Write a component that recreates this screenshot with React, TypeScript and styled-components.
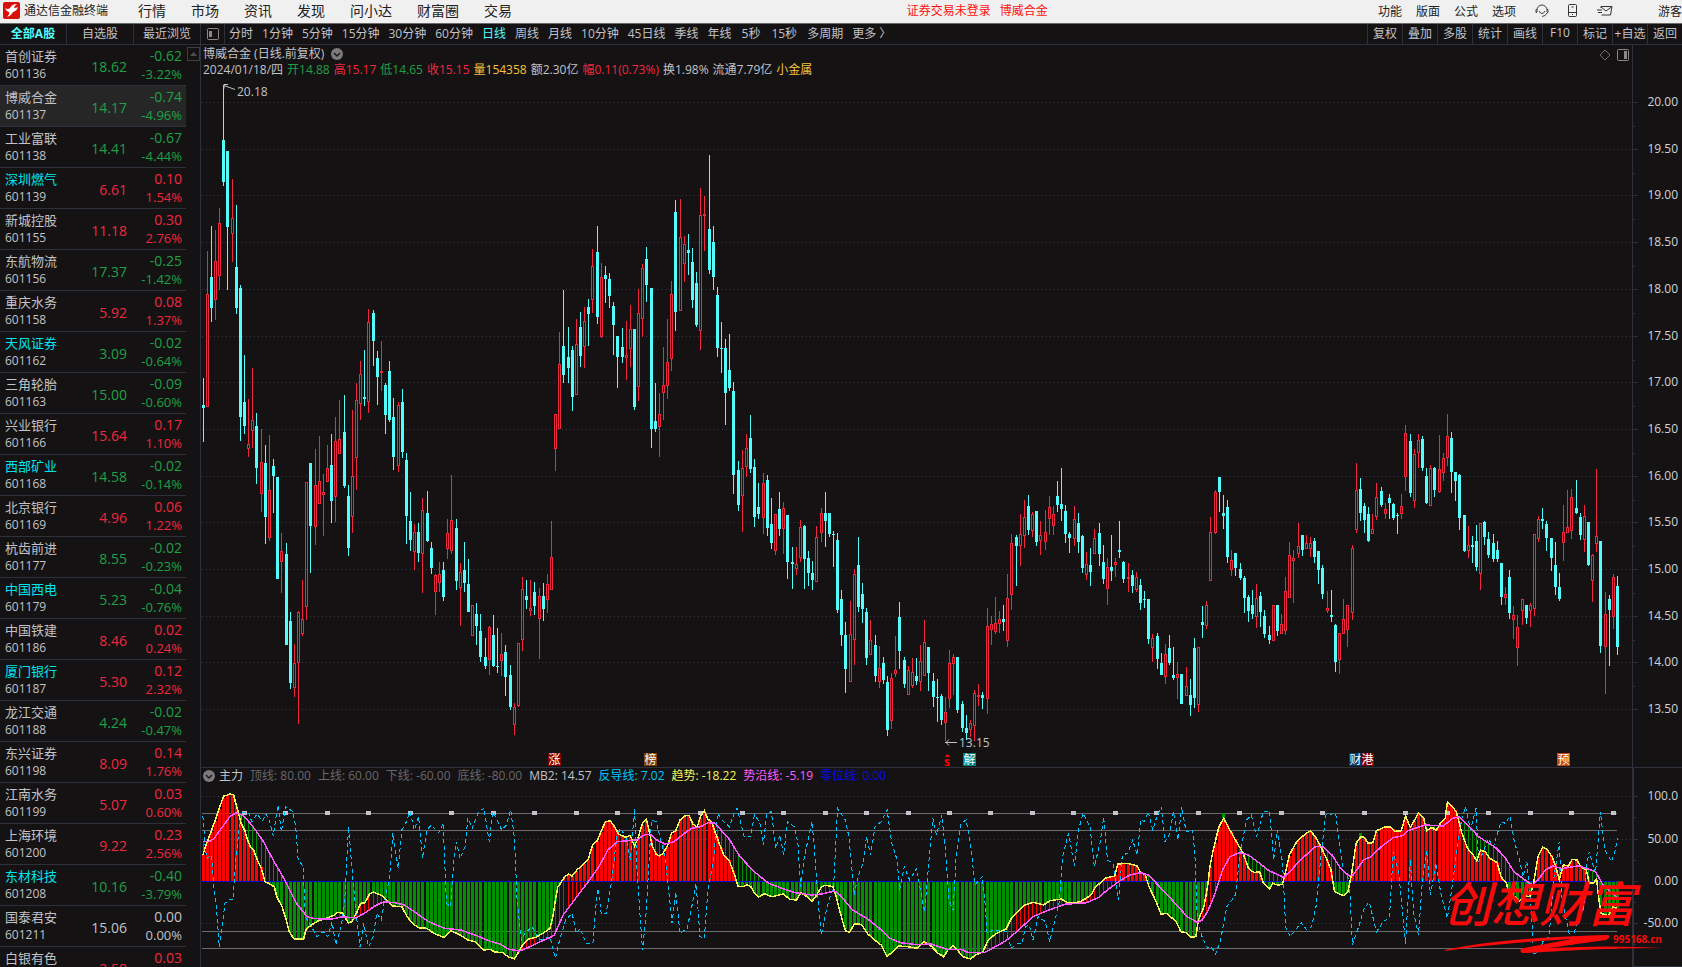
import React from 'react';
import styled, { createGlobalStyle } from 'styled-components';

const c = {
  bg: '#141213',
  line: '#2e303c',
  text: '#c2c2c8',
  dim: '#69676b',
  up: '#f0283f',
  down: '#1fa046',
  cyan: '#54fcfc',
  gold: '#f5c242',
};

const Global = createGlobalStyle`
  * { box-sizing: border-box; }
  html, body { margin: 0; background: ${c.bg}; }
  body, button { font-family: "Open Sans", "Noto Sans CJK SC", sans-serif; font-size: 12px; }
  button { border: 0; padding: 0; margin: 0; background: none; color: inherit; white-space: nowrap; cursor: pointer; }
`;

const Page = styled.div`
  display: flex;
  flex-direction: column;
  height: 100vh;
  overflow: hidden;
  color: ${c.text};
  line-height: 16px;
`;

const TopBar = styled.header`
  display: flex;
  align-items: center;
  height: 24px;
  flex: none;
  padding: 0 0 2px 3px;
  background: #f0f0f0;
  border-bottom: 1px solid #6a6a6a;
  color: #222;
  overflow: hidden;
`;
const Brand = styled.div`
  display: flex;
  align-items: center;
  gap: 4px;
  width: 135px;
  flex: none;
`;
const Menu = styled.nav`
  display: flex;
  gap: 25px;
  flex: 62 1 0;
  button { font-size: 14px; line-height: 20px; }
`;
const Notice = styled.div`
  display: flex;
  flex: 38 1 0;
  gap: 9px;
  color: #ff1010;
`;
const Tools = styled.div`
  display: flex;
  align-items: center;
  gap: 14px;
  flex: none;
`;
const ToolIcons = styled.div`
  display: flex;
  align-items: center;
  gap: 19px;
  width: 114px;
  padding-left: 5px;
`;
const Guest = styled.button`
  width: 24px;
`;

const ToolBar = styled.div`
  display: flex;
  height: 21px;
  flex: none;
  border-bottom: 1px solid ${c.line};
`;
const ListTabs = styled.div`
  display: flex;
  width: 201px;
  flex: none;
  border-right: 1px solid ${c.line};
`;
const ListTab = styled.button<{ $on?: boolean }>`
  flex: 1;
  padding-bottom: 3px;
  border-right: 1px solid ${c.line};
  color: ${(p) => (p.$on ? c.cyan : c.text)};
  font-weight: ${(p) => (p.$on ? 700 : 400)};
  &:last-child { border-right: 0; }
`;
const PanelToggle = styled.button`
  width: 24px;
  height: 20px;
  padding-top: 3px;
  border-right: 1px solid ${c.line};
`;
const Periods = styled.nav`
  display: flex;
  flex: 1;
  gap: 9px;
  padding: 0 0 3px 4px;
`;
const Period = styled.button<{ $on?: boolean; $wide?: boolean }>`
  color: ${(p) => (p.$on ? c.cyan : c.text)};
  padding: 0 ${(p) => (p.$wide ? 1 : 0)}px;
`;
const Actions = styled.div`
  display: flex;
`;
const Action = styled.button`
  width: 35px;
  padding-bottom: 3px;
  border-left: 1px solid ${c.line};
  overflow: hidden;
`;

const Main = styled.main`
  display: flex;
  flex: 1;
  min-height: 0;
`;
const Side = styled.aside`
  display: flex;
  width: 201px;
  flex: none;
  overflow: hidden;
  border-right: 1px solid ${c.line};
`;
const Scroll = styled.div`
  width: 14px;
  padding: 2px 0 0 1px;
`;
const ScrollUp = styled.button`
  display: flex;
  align-items: center;
  justify-content: center;
  width: 13px;
  height: 14px;
  border: 1px solid #3e3e42;
`;
const Stocks = styled.table`
  width: 186px;
  height: max-content;
  border-spacing: 0;
  table-layout: fixed;
`;
const StockRow = styled.tr<{ $on?: boolean }>`
  background: ${(p) => (p.$on ? '#262626' : 'transparent')};
`;
const Cell = styled.td<{ $tone?: string; $right?: boolean }>`
  height: 41px;
  padding: 2px 4px 0 5px;
  border-bottom: 1px solid ${c.line};
  vertical-align: top;
  font-size: 13px;
  line-height: 18px;
  text-align: ${(p) => (p.$right ? 'right' : 'left')};
  color: ${(p) => p.$tone || c.text};
`;
const PriceCell = styled(Cell)`
  padding: 13px 0 0;
  font-size: 14px;
`;
const Name = styled.div<{ $marked?: boolean }>`
  color: ${(p) => (p.$marked ? '#00e5ee' : c.text)};
`;
const Code = styled.div`
  font-size: 12px;
`;
const Change = styled.div`
  font-size: 14px;
`;

const Charts = styled.div`
  display: flex;
  flex-direction: column;
  flex: 1;
  min-width: 0;
`;
const PricePanel = styled.section`
  display: flex;
  flex-direction: column;
  flex: 1;
  min-height: 0;
  border-bottom: 1px solid ${c.line};
`;
const IndicatorPanel = styled.section`
  display: flex;
  flex-direction: column;
  height: 199px;
  flex: none;
`;
const Head = styled.div<{ $tall?: boolean }>`
  display: flex;
  height: ${(p) => (p.$tall ? 33 : 16)}px;
  flex: none;
`;
const HeadBody = styled.div<{ $low?: boolean }>`
  flex: 1;
  min-width: 0;
  padding: ${(p) => (p.$low ? 1 : 0)}px 0 0 2px;
`;
const HeadLine = styled.div<{ $gap: number }>`
  display: flex;
  align-items: center;
  gap: ${(p) => p.$gap}px;
  height: 16px;
  white-space: nowrap;
`;
const Title = styled.span`
  margin-right: 3px;
`;
const HeadIcons = styled.div`
  display: flex;
  align-items: center;
  gap: 6px;
  height: 19px;
  padding-right: 3px;
`;
const AxisGap = styled.div<{ $thick?: boolean }>`
  width: 50px;
  border-left: ${(p) => (p.$thick ? 2 : 1)}px solid ${c.line};
`;
const Value = styled.span<{ $tone?: string }>`
  color: ${(p) => p.$tone || c.text};
`;
const Plot = styled.svg`
  display: block;
  width: 100%;
  flex: 1;
  min-height: 0;
  font-size: 12px;
`;

/* name, code, price, change, percent, marked */
const stocks: [string, string, string, string, string, boolean?][] = [
  ['首创证券', '601136', '18.62', '-0.62', '-3.22%'],
  ['博威合金', '601137', '14.17', '-0.74', '-4.96%'],
  ['工业富联', '601138', '14.41', '-0.67', '-4.44%'],
  ['深圳燃气', '601139', '6.61', '0.10', '1.54%', true],
  ['新城控股', '601155', '11.18', '0.30', '2.76%'],
  ['东航物流', '601156', '17.37', '-0.25', '-1.42%'],
  ['重庆水务', '601158', '5.92', '0.08', '1.37%'],
  ['天风证券', '601162', '3.09', '-0.02', '-0.64%', true],
  ['三角轮胎', '601163', '15.00', '-0.09', '-0.60%'],
  ['兴业银行', '601166', '15.64', '0.17', '1.10%'],
  ['西部矿业', '601168', '14.58', '-0.02', '-0.14%', true],
  ['北京银行', '601169', '4.96', '0.06', '1.22%'],
  ['杭齿前进', '601177', '8.55', '-0.02', '-0.23%'],
  ['中国西电', '601179', '5.23', '-0.04', '-0.76%', true],
  ['中国铁建', '601186', '8.46', '0.02', '0.24%'],
  ['厦门银行', '601187', '5.30', '0.12', '2.32%', true],
  ['龙江交通', '601188', '4.24', '-0.02', '-0.47%'],
  ['东兴证券', '601198', '8.09', '0.14', '1.76%'],
  ['江南水务', '601199', '5.07', '0.03', '0.60%'],
  ['上海环境', '601200', '9.22', '0.23', '2.56%'],
  ['东材科技', '601208', '10.16', '-0.40', '-3.79%', true],
  ['国泰君安', '601211', '15.06', '0.00', '0.00%'],
  ['白银有色', '601212', '2.58', '0.03', '1.18%'],
];

const tone = (change: string) =>
  change.startsWith('-') ? c.down : Number(change) === 0 ? c.text : c.up;

/* Each candle: direction + x, then high, body top, body bottom, low in block units. */
const blocks = [
  {
    x: 200, y: 80, unit: 2.376,
    bars: `d10 708 773 779 860,u22 406 508 776 776,d34 347 468 542 575,u46 356 430 522 570,u58 304 340 465 499,d70 12 143 242 252,d82 169 169 349 499,u97 235 328 365 432,d109 297 444 542 556,d121 487 494 801 858,d133 653 765 822 841,u145 758 865 877 896,u157 684 808 835 874,d169 791 822 922 960,u184 829 908 983 1026,d196 867 910 1038 1102,u208 843 974 1089 1095,d220 900 917 941 1029,d232 943 943 1186 1186,u244 1076 1119 1145 1219,d259 1100 1126 1342 1342,d271 1264 1285 1433 1447,u283 1340 1385 1444 1466,u295 1262 1264 1385 1530,u307 1188 1281 1316 1321,u319 955 955 1252 1283,d331 910 910 1060 1171,u346 877 962 1061 1105,u358 846 953 1007 1007,u370 936 979 987 1083,u382 867 922 955 955,d394 841 915 1000 1052,u406 801 858 990 1050,u418 760 853 888 888,d433 748 836 965 969,d445 962 988 1112 1131,u457 784 941 1038 1076,u469 720 760 898 974,u481 668 698 769 808,d493 641 753 758 774,u505 544 575 765 791,d520 546 554 620 679,d532 644 660 706 772,u544 620 691 696 739,d556 720 725 796 841,d568 668 691 808 813,d580 755 801 896 927,u595 765 772 916 931,d607 734 765 884 898,d619 886 903 1036 1102,d631 979 1048 1093 1119,u643 1055 1074 1121 1164,d655 1052 1074 1124 1145,u667 993 1022 1126 1219,d682 976 1029 1095 1098,d694 1098 1112 1159 1174,u706 1174 1176 1216 1271,u718 1145 1174 1195 1216,d730 1145 1164 1228 1238,u742 1043 1076 1114 1138,u754 938 1045 1119 1126,d769 1043 1064 1190 1212,u781 1147 1169 1207 1297,d793 1098 1164 1195 1216,d805 1138 1197 1264 1264,u817 1247 1247 1321 1321,d829 1243 1269 1297 1342,d841 1269 1309 1371 1383,d856 1326 1371 1392 1399,u868 1297 1300 1378 1414,d880 1271 1319 1392 1395,d892 1302 1392 1395 1409,u904 1314 1364 1380 1416,d916 1342 1359 1418 1463,d931 1390 1414 1490 1497,u943 1480 1490 1532 1556,u955 1338 1338 1487 1490,u967 1181 1209 1330 1357,d979 1188 1226 1235 1257,u991 1188 1254 1262 1273,d1003 1193 1216 1250 1271,u1018 1207 1226 1280 1376,d1030 1195 1226 1257 1285,u1042 1174 1197 1235 1266,u1054 1048 1133 1211 1211`,
  },
  {
    x: 540, y: 120, unit: 2.45,
    bars: `u46 720 720 805 860,u58 519 598 757 757,d70 416 554 625 644,d85 507 581 608 644,d97 554 563 679 713,u109 488 549 673 673,d121 470 507 578 605,u133 458 492 555 608,d145 439 458 475 554,u157 316 358 441 473,d172 260 323 483 500,u184 350 385 531 534,d196 358 380 390 448,d208 375 390 431 461,d220 446 456 502 576,d232 529 529 581 657,d247 510 556 581 595,u259 492 576 583 637,u271 453 512 560 605,d283 512 512 703 710,u295 414 473 654 688,u307 353 363 487 532,d319 311 341 404 446,d334 412 412 757 804,d346 644 737 757 764,u358 669 720 751 826,u370 556 649 668 735,u382 488 593 652 684,u394 394 426 585 615,d406 196 225 470 517,u421 194 287 469 469,u433 284 304 352 397,d445 279 318 326 380,d457 314 348 441 461,d469 372 399 502 507,u481 167 233 517 563,u493 186 230 235 321,d508 86 267 367 377,d520 260 299 385 416,d532 409 429 559 581,d544 495 559 562 620,d556 537 559 669 747,d568 524 612 657 664,d580 642 664 870 916,d595 835 857 943 958,u607 808 853 920 1009,u619 769 804 850 875,d631 723 779 855 865,d643 831 850 973 997,d655 889 948 965 978,u670 865 889 975 1014,d682 870 882 1000 1019,d694 926 990 1036 1051,u706 965 965 1055 1066,d718 911 953 1002 1019,u730 936 951 1003 1063,d742 968 968 1083 1125,d757 1046 1083 1088 1149,u769 1046 1088 1100 1115,u781 980 997 1073 1083,d793 992 995 1076 1149,d805 1056 1073 1110 1142,d817 1080 1110 1127 1151,u829 995 1022 1133 1133,u844 951 963 1011 1034,d856 911 963 982 1046,d868 963 963 1014 1022,d880 1007 1014 1017 1095,d892 1012 1029 1200 1208,d904 1151 1174 1262 1289,d916 1230 1262 1345 1404,u931 1178 1259 1377 1377,u943 1100 1112 1274 1335,d955 1022 1090 1193 1205,d967 1134 1161 1198 1232,d979 1196 1205 1318 1335,u991 1225 1274 1310 1310,d1006 1262 1286 1362 1377,u1018 1289 1343 1377 1392,d1030 1316 1330 1372 1382,d1042 1362 1377 1494 1509,u1054 1355 1367 1472 1492,u1066 1264 1347 1357 1365,d1078 1181 1218 1301 1345`,
  },
  {
    x: 900, y: 400, unit: 3,
    bars: `d13 771 780 852 864,u25 798 810 885 885,u37 774 816 857 864,d49 774 828 843 855,u61 735 783 846 873,u73 660 726 828 828,d85 741 741 819 873,d100 819 843 891 921,d112 837 891 894 966,d124 882 888 960 975,u136 891 936 969 1023,u148 750 789 897 924,u160 762 771 792 885,d172 771 771 930 939,d187 903 912 984 996,d199 945 984 999 1020,u211 960 969 990 1011,u223 870 879 978 1023,u235 852 885 891 918,d247 876 885 894 927,u262 624 678 897 942,u274 648 672 690 735,u286 591 669 696 702,u298 633 657 672 699,d310 615 657 666 693,u322 522 594 723 741,u334 402 429 585 630,d349 405 411 438 558,u361 342 402 438 498,u373 300 351 408 444,d385 285 318 390 405,u397 336 342 393 411,d409 333 333 426 438,u421 363 405 423 465,u436 330 396 426 450,u448 288 321 357 405,u460 318 342 378 405,d472 243 288 315 336,d484 204 312 327 363,d496 315 333 402 429,d508 396 402 414 459,u523 318 357 417 438,d535 339 369 426 459,d547 405 408 504 519,u559 456 492 525 540,d571 444 495 516 558,u583 387 414 462 462,d598 369 399 462 498,d610 435 486 537 552,u622 474 501 567 615,d634 405 501 513 543,u646 474 486 495 531,d658 363 450 456 474,d670 483 486 537 549,u685 489 531 537 576,d697 510 525 558 579,u709 516 531 570 576,d721 537 555 609 630,d733 573 597 600 624,d745 597 597 717 732,u757 702 714 744 786,d772 699 708 777 807,d784 759 789 825 825,u796 732 762 831 852,d808 705 744 789 795,d820 741 825 834 840,u832 786 822 834 897,d844 822 822 912 912,u859 801 858 888 888,d871 837 885 915 948,d883 714 744 894 924,u895 741 741 915 936,d907 618 666 675 714,u919 603 615 678 687,u931 351 396 543 543,u946 270 276 399 402,d958 231 231 276 336,d970 285 339 348 387,d982 300 321 471 489,u994 450 480 510 528,d1006 459 459 504 528,d1021 489 507 534 540,d1033 528 534 594 639,d1045 585 591 633 666,d1057 570 615 642 657,u1069 552 594 651 684,d1081 576 588 636 681,d1093 630 648 702 714,d1108 678 705 720 732,u1120 615 615 723 723,d1132 615 615 693 708,u1144 642 672 702 702,u1156 531 573 693 705,u1168 426 465 594 594,u1180 450 474 483 609,u1195 369 438 462 474`,
  },
  {
    x: 1280, y: 380, unit: 3,
    bars: `d67 465 465 510 528,u79 465 489 507 507,u91 471 489 507 531,d103 474 483 531 549,d115 513 513 570 612,d127 555 564 642 657,u142 633 684 693 699,d154 630 705 711 726,d166 732 735 846 876,u178 759 759 840 882,u190 657 717 762 762,u202 675 675 750 801,u217 495 504 699 720,u229 249 330 450 459,d241 294 327 399 423,d253 369 378 420 459,d265 381 402 483 486,u277 402 447 462 462,u289 309 351 411 420,d304 321 333 375 381,u316 369 387 402 417,d328 342 354 369 417,d340 369 372 414 420,d352 399 405 408 462,u364 342 378 402 417,u376 135 159 291 333,d391 162 183 339 351,u403 207 222 363 384,u415 162 180 219 264,d427 168 177 264 273,d439 264 288 369 372,u451 255 264 378 378,d463 261 264 330 351,u478 165 267 336 339,u490 219 234 279 303,u502 102 168 234 258,d514 156 174 276 339,d526 276 276 303 363,d538 282 285 414 450,d553 405 405 513 516,u565 438 495 513 534,d577 468 495 501 549,d589 435 483 561 573,u601 429 429 582 630,d613 423 426 471 495,d625 456 477 525 534,d640 462 489 537 546,d652 483 510 537 546,d664 549 549 651 675,u676 621 642 654 675,d688 570 591 699 717,u700 678 705 720 777,u712 705 741 804 858,u727 657 657 693 735,d739 675 675 714 732,u751 669 675 693 741,u763 462 462 687 708,u775 408 417 477 486,d787 384 417 423 447,d799 423 432 474 513,d814 474 474 534 573,d826 486 555 621 645,d838 579 621 657 663,u850 375 456 489 543,u862 330 441 459 459,u874 327 351 453 477,d889 300 384 399 402,d901 399 411 465 480,u913 375 408 480 516,d925 426 426 555 558,u937 522 525 603 666,u949 267 468 492 516,d961 483 483 798 819,u976 636 702 801 942,d988 645 657 690 858,u1000 582 591 711 747,d1012 588 618 801 825`,
  },
];

type Candle = { x: number; up: boolean; high: number; top: number; bottom: number; low: number };

const candles: Candle[] = blocks.flatMap((b) =>
  b.bars.split(',').map((s) => {
    const [x, ...ys] = s.slice(1).split(' ').map(Number);
    const [high, top, bottom, low] = ys.map((v) => b.y + Math.round(v / b.unit));
    return { x: b.x + Math.floor(x / 3), up: s[0] === 'u', high, top, bottom: Math.max(bottom, top + 1), low };
  }),
);

type Point = [number, number];
/* Three stretches of a curve, each with its own origin and horizontal unit. */
const curve = (...parts: string[]): Point[] =>
  parts.flatMap((part, i) =>
    part.split(' ').map((p) => {
      const [x, y] = p.split(',').map(Number);
      return [[0, 540, 1100][i] + x / [2.8, 2.8, 2.694][i], 740 + y / 3] as Point;
    }),
  );

const trend = curve(
  '568,345 578,312 590,278 602,242 614,205 626,168 635,166 644,162 654,164 660,190 670,228 675,250 685,270 693,300 700,318 710,330 720,358 732,385 742,425 752,430 768,440 775,470 790,500 800,535 810,575 822,596 850,598 857,568 872,555 890,543 910,536 935,526 945,517 960,520 975,549 985,545 1000,515 1010,490 1022,488 1035,462 1045,456 1058,462 1070,467 1085,482 1100,498 1125,500 1140,530 1155,550 1172,563 1195,565 1215,580 1243,592 1262,572 1285,583 1310,600 1330,605 1355,630 1372,628 1385,636 1408,638 1425,652 1440,656 1450,640 1465,612 1478,598 1500,592 1520,580 1540,565 1548,530 1555,480 1562,440',
  '56,432 60,425 70,410 80,402 90,408 105,388 120,375 135,358 147,315 160,303 172,272 183,245 197,243 210,262 220,282 240,292 252,286 265,318 275,292 287,250 298,238 305,270 315,320 325,342 335,348 345,340 358,315 368,280 380,272 392,240 405,228 417,226 428,252 440,262 450,228 460,212 470,238 480,245 490,275 500,305 515,345 530,362 545,405 555,440 570,440 580,434 592,442 600,460 612,471 628,461 650,470 680,462 700,478 718,480 730,458 745,468 762,484 775,465 788,440 800,436 820,440 828,465 836,500 845,535 855,572 867,577 880,552 900,553 918,582 935,598 955,615 972,650 990,632 1005,618 1030,620 1055,625 1075,605 1095,618 1115,640 1130,650 1142,630 1157,617 1170,632 1185,650 1205,657 1220,645 1240,635 1255,600 1275,582 1305,567 1320,535 1340,512 1358,495 1380,487 1410,495 1428,482 1460,477 1480,490 1510,486 1530,475 1545,462 1555,440',
  '0,430 15,414 40,408 48,372 75,370 100,378 110,398 122,405 132,440 150,482 165,523 180,520 205,545 218,575 232,578 245,592 258,590 265,540 280,500 290,440 296,380 305,330 320,262 333,235 350,270 370,310 385,338 400,385 415,398 430,395 440,428 457,446 465,430 480,436 492,432 500,395 510,345 530,305 555,280 567,273 580,290 595,320 610,355 622,390 632,455 645,462 658,467 668,455 678,400 690,310 703,290 712,292 722,310 735,308 745,272 765,262 782,260 795,274 812,272 823,228 836,262 845,245 858,218 872,235 880,272 895,262 905,272 920,245 930,235 936,186 945,195 960,215 975,280 990,325 1005,345 1015,362 1025,330 1038,335 1050,355 1070,368 1080,410 1095,430 1100,455 1115,468 1130,484 1145,468 1158,470 1168,430 1180,350 1192,322 1203,326 1218,350 1228,380 1237,420 1248,375 1262,378 1272,358 1285,360 1295,380 1310,390 1318,428 1328,430 1338,418 1343,470 1350,520 1370,528 1382,500 1392,505',
);
const signal = curve(
  '568,305 585,305 600,295 620,265 645,228 662,218 680,226 705,255 735,300 765,360 800,425 830,490 860,530 880,536 930,537 960,530 995,534 1020,520 1050,498 1075,485 1105,488 1130,494 1160,515 1200,545 1245,565 1290,570 1330,585 1370,603 1400,612 1425,628 1455,633 1480,622 1515,604 1545,590',
  '40,585 65,525 100,475 135,425 165,380 190,330 215,305 270,300 295,283 310,284 330,302 350,312 375,305 405,280 425,265 450,260 470,248 490,250 530,298 560,350 600,395 640,430 680,446 715,458 760,465 790,462 825,453 840,465 875,510 915,535 950,565 980,595 1010,608 1055,614 1095,612 1140,628 1180,628 1200,638 1245,638 1275,620 1305,602 1340,570 1380,530 1420,512 1470,493 1530,488 1565,472',
  '20,450 50,425 80,405 110,398 130,405 165,445 200,487 235,530 262,547 275,540 290,515 310,460 330,390 350,350 375,338 400,345 430,370 455,392 495,412 515,390 545,355 580,320 600,320 625,345 650,388 672,408 682,405 710,360 730,350 760,318 790,293 815,287 830,272 875,255 925,258 950,235 968,230 990,255 1020,290 1065,322 1090,350 1115,395 1145,420 1165,435 1180,420 1200,390 1220,378 1245,386 1290,377 1335,395 1355,435 1385,465 1395,475',
);
const reverse = curve(
  '568,228 575,330 580,355 592,345 600,460 606,500 614,620 622,560 630,490 642,478 652,478 660,360 670,262 680,218 695,215 705,245 720,222 735,243 745,222 755,245 765,288 778,195 788,275 800,200 820,215 828,260 835,360 848,378 855,530 872,560 888,590 905,575 918,590 930,545 940,614 955,560 965,490 970,380 976,260 985,380 995,500 1008,620 1018,550 1032,620 1045,590 1055,520 1068,540 1078,470 1090,420 1100,280 1115,385 1125,270 1138,245 1148,215 1160,270 1172,230 1183,355 1195,270 1208,255 1228,278 1241,250 1250,490 1262,500 1270,370 1278,305 1288,355 1302,320 1310,235 1322,265 1340,215 1355,205 1370,305 1380,215 1405,270 1418,255 1430,210 1440,290 1448,480 1460,600 1470,580 1490,560 1510,600 1540,590',
  '43,655 55,600 72,540 90,520 102,580 112,565 130,610 148,610 155,510 162,445 172,525 185,520 200,430 215,290 225,265 240,290 253,360 265,205 272,400 287,630 297,520 312,240 325,245 335,285 350,350 358,430 370,550 380,455 392,580 412,565 425,500 437,430 448,590 460,595 470,450 485,370 497,220 510,240 530,260 542,225 552,205 572,290 590,290 600,225 615,245 625,315 635,220 648,215 660,325 672,285 682,345 693,245 712,260 722,310 730,440 740,350 762,245 770,350 778,480 788,585 800,520 812,470 822,440 833,205 855,240 865,290 880,465 890,410 905,370 914,290 926,345 938,260 955,245 972,210 985,310 1000,360 1007,450 1020,380 1035,420 1055,385 1065,450 1077,515 1090,350 1100,235 1110,285 1125,225 1135,330 1145,480 1157,510 1165,350 1178,250 1193,240 1205,310 1218,435 1238,410 1245,470 1252,580 1270,570 1290,570 1305,575 1320,625 1335,610 1350,610 1360,560 1370,555 1380,600 1395,530 1415,545 1427,605 1440,550 1455,480 1463,350 1480,280 1496,378 1508,270 1520,220 1540,260 1552,380',
  '0,310 10,232 20,360 35,370 50,480 60,345 75,340 88,300 100,345 110,240 120,245 130,215 142,270 152,235 165,200 175,305 188,280 198,215 210,300 220,200 232,275 250,270 257,370 262,545 275,590 290,625 300,620 312,642 325,600 342,500 365,465 378,335 395,240 408,225 422,290 440,215 457,212 468,360 478,270 492,370 500,560 512,590 530,565 542,548 557,570 570,560 582,500 595,350 608,225 635,220 645,310 655,390 672,420 680,615 700,550 710,510 725,485 745,575 760,550 780,530 790,335 805,400 812,480 823,612 836,360 845,520 858,585 868,430 880,330 890,465 905,370 918,460 936,535 950,430 965,300 975,235 985,200 998,270 1013,205 1020,365 1035,330 1045,295 1060,320 1080,245 1092,250 1105,228 1115,300 1130,360 1140,410 1150,365 1160,480 1168,640 1182,638 1195,600 1210,590 1222,420 1237,305 1245,480 1260,560 1270,615 1282,560 1292,500 1303,515 1310,380 1318,335 1335,400 1348,215 1360,330 1378,365 1388,330 1395,295',
);

const at = (pts: Point[], x: number) => {
  const i = pts.findIndex((p) => p[0] >= x);
  if (i === -1) return pts[pts.length - 1][1];
  if (i === 0) return pts[0][1];
  const [a, b] = [pts[i - 1], pts[i]];
  return a[1] + ((b[1] - a[1]) * (x - a[0])) / (b[0] - a[0]);
};
const toPath = (pts: Point[]) => pts.map((p) => p.map((v) => v.toFixed(1)).join(',')).join(' ');

const ZERO = 881;
const priceTicks = Array.from({ length: 14 }, (_, i) => ({
  label: (20 - i * 0.5).toFixed(2),
  y: 102 + Math.round(i * 46.7),
}));
const badges = [
  { x: 548, text: '涨', fill: '#800000' },
  { x: 644, text: '榜', fill: '#804000' },
  { x: 963, text: '解', fill: '#008080' },
  { x: 1349, text: '财', fill: '#003a6c' },
  { x: 1361, text: '港', fill: '#800000' },
  { x: 1557, text: '预', fill: '#c0480c' },
];

const PricePlot = () => (
  <Plot viewBox="201 78 1481 689" preserveAspectRatio="xMinYMin meet" role="img" aria-label="日线">
    {priceTicks.map((t) => (
      <g key={t.label}>
        <line x1="202" x2="1632" y1={t.y + 0.5} y2={t.y + 0.5} stroke="#3a3b45" strokeDasharray="1 3" />
        <path d={`M1633 ${t.y + 0.5}h5`} stroke={c.line} />
        {t.label !== '13.50' && <path d={`M1633 ${t.y + 24.5}h2`} stroke={c.line} />}
        <text x="1678" y={t.y + 4} textAnchor="end" fill="#d2d2d6">{t.label}</text>
      </g>
    ))}
    <path d="M1632.5 78V767" stroke={c.line} />
    <g shapeRendering="crispEdges">
      {candles.map((k) =>
        k.up ? (
          <g key={k.x} fill={c.up}>
            <rect x={k.x} y={k.high} width="1" height={k.top - k.high} />
            <rect x={k.x} y={k.bottom} width="1" height={Math.max(0, k.low - k.bottom)} />
            <path d={`M${k.x - 1} ${k.top}h3v${k.bottom - k.top}h-3zM${k.x} ${k.top + 1}v${Math.max(0, k.bottom - k.top - 2)}h1v${-Math.max(0, k.bottom - k.top - 2)}z`} fillRule="evenodd" />
          </g>
        ) : (
          <g key={k.x} fill={c.cyan}>
            <rect x={k.x} y={k.high} width="1" height={k.low - k.high} />
            <rect x={k.x - 1} y={k.top} width="3" height={k.bottom - k.top} />
          </g>
        ),
      )}
    </g>
    <path d="M228 84.500h-4v4M224 85.500l11 4" fill="none" stroke={c.text} />
    <text x="237" y="96" fill={c.text}>20.18</text>
    <path d="M945 742.500h12M949 739.500l-3 3 3 3" fill="none" stroke={c.text} />
    <text x="959" y="747" fill={c.text}>13.15</text>
    {badges.map((b) => (
      <g key={b.x}>
        <rect x={b.x} y="753" width="13" height="13" fill={b.fill} />
        <text x={b.x + 0.5} y="764" fill="#fff">{b.text}</text>
      </g>
    ))}
    <path d="M947.500 754l3 3h-6z" fill="#f00" />
    <text x="944" y="766" fill="#f00" fontWeight="700">s</text>
  </Plot>
);

const IndicatorPlot = () => (
  <Plot viewBox="201 784 1481 183" preserveAspectRatio="xMinYMin meet" role="img" aria-label="主力">
    {[796, 839, 923].map((y) => (
      <line key={y} x1="202" x2="1632" y1={y + 0.5} y2={y + 0.5} stroke="#3a3b45" strokeDasharray="1 3" />
    ))}
    {[813, 830, 931, 948].map((y) => (
      <line key={y} x1="202" x2="1617" y1={y + 0.5} y2={y + 0.5} stroke="#6c6a6d" />
    ))}
    <g shapeRendering="crispEdges">
      {candles.map((k) => {
        const y = Math.round(at(trend, k.x));
        const s = Math.round(at(signal, k.x));
        return (
          <g key={k.x}>
            <rect x={k.x} y={Math.min(y, s)} width="1" height={Math.abs(y - s)} fill={y < s ? '#f00' : '#009000'} />
            <rect x={k.x - 1} y={Math.min(y, ZERO)} width="3" height={Math.abs(y - ZERO)} fill={y < ZERO ? '#f00' : '#009000'} />
          </g>
        );
      })}
      <rect x="1222" y="813" width="3" height="5" fill="#009000" />
      <rect x="1359" y="833" width="3" height="4" fill="#009000" />
    </g>
    {Array.from({ length: 34 }, (_, i) => (
      <rect key={i} x={242 + Math.round(i * 41.47)} y="811" width="5" height="4" fill="#c4c0cc" />
    ))}
    <path d="M202 881.500H1617" stroke="#0a0adc" />
    <g fill="none" shapeRendering="crispEdges">
      <polyline points={toPath(reverse)} stroke="#00c4ff" strokeDasharray="4 3" />
      <polyline points={toPath(trend)} stroke="#f4f45c" strokeWidth="1.500" />
      <polyline points={toPath(signal)} stroke="#ff5cff" strokeWidth="1.500" />
    </g>
    <path d="M1633 784V967" stroke={c.line} strokeWidth="2" />
    {[['100.0', 796], ['50.00', 839], ['0.00', 881], ['-50.00', 923]].map(([label, y]) => (
      <g key={label}>
        <path d={`M1634 ${Number(y) + 0.5}h4M1634 ${Number(y) + 21.5}h2`} stroke={c.line} />
        <text x="1678" y={Number(y) + 4} textAnchor="end" fill="#d2d2d6">{label}</text>
      </g>
    ))}
    <path d="M1634 966.500H1682" stroke={c.line} />
    <g fill="#f80a0a">
      <text x="1443" y="922" fontSize="48" fontStyle="italic" fontWeight="500">创想财富</text>
      <path d="M1445 950C1480 942 1530 937 1608 935Q1612 937 1606 940Q1570 945 1548 948Q1610 945 1663 948Q1610 948 1560 951Q1530 953 1522 953Q1518 949 1524 948L1572 939Q1500 943 1445 951z" />
      <text x="1613" y="943" fontSize="10" fontWeight="700">995168.cn</text>
    </g>
  </Plot>
);

const RoundToggle = () => (
  <svg width="12" height="12" viewBox="0 0 12 12" aria-hidden="true">
    <circle cx="6" cy="6" r="6" fill="#7c7a7d" />
    <path d="M3 5l3 3 3-3" fill="none" stroke="#1c1a1b" strokeWidth="1.500" />
  </svg>
);

const quote: [string, string?][] = [
  ['2024/01/18/四'], ['开14.88', c.down], ['高15.17', c.up], ['低14.65', c.down], ['收15.15', c.up],
  ['量154358', c.gold], ['额2.30亿'], ['幅0.11(0.73%)', c.up], ['换1.98%'], ['流通7.79亿'], ['小金属', c.gold],
];
const readings: [string, string?][] = [
  ['顶线: 80.00', c.dim], ['上线: 60.00', c.dim], ['下线: -60.00', c.dim], ['底线: -80.00', c.dim],
  ['MB2: 14.57'], ['反导线: 7.02', '#00c4ff'], ['趋势: -18.22', '#f4f45c'], ['势沿线: -5.19', '#ff5cff'], ['零位线: 0.00', '#0a0aec'],
];
const periods = ['分时', '1分钟', '5分钟', '15分钟', '30分钟', '60分钟', '日线', '周线', '月线', '10分钟', '45日线', '季线', '年线', '5秒', '15秒', '多周期', '更多 〉'];

export default function App() {
  return (
    <Page>
      <Global />
      <TopBar>
        <Brand>
          <svg width="17" height="17" viewBox="0 0 17 17" aria-hidden="true">
            <rect width="17" height="17" rx="2" fill="#d8100c" />
            <path d="M2 6Q5 8 7 6Q9 2 14 2Q11 4 11 6Q13 6 15 5Q14 9 10 10Q8 14 4 15Q7 12 6 10Q3 9 2 6z" fill="#fff" />
          </svg>
          通达信金融终端
        </Brand>
        <Menu>
          {['行情', '市场', '资讯', '发现', '问小达', '财富圈', '交易'].map((m) => <button key={m}>{m}</button>)}
        </Menu>
        <Notice><span>证券交易未登录</span><span>博威合金</span></Notice>
        <Tools>
          {['功能', '版面', '公式', '选项'].map((m) => <button key={m}>{m}</button>)}
          <ToolIcons>
            <svg width="14" height="14" viewBox="0 0 14 14" fill="none" stroke="#444" aria-label="客服">
              <path d="M2 8V6a5 5 0 0 1 10 0v2M2 5.500H1v3h1M12 5.500h1v3h-1M12 9q-1 3-5 3.500M4 7q1 2.500 3 2.500T10 7" />
            </svg>
            <svg width="10" height="14" viewBox="0 0 10 14" fill="none" stroke="#333" aria-label="手机">
              <rect x=".5" y=".5" width="8" height="12" rx="1" /><path d="M1 8.500h7M4 10.500h1M3.500 3h2" />
            </svg>
            <svg width="16" height="12" viewBox="0 0 16 12" fill="none" stroke="#333" aria-label="邮件">
              <path d="M4 3V1.500h11L13.500 10H4.500M4 2l5 4 5.500-4M0 5h5M1 7.500h4" />
            </svg>
          </ToolIcons>
          <Guest>游客</Guest>
        </Tools>
      </TopBar>
      <ToolBar>
        <ListTabs>
          <ListTab $on>全部A股</ListTab>
          <ListTab>自选股</ListTab>
          <ListTab>最近浏览</ListTab>
        </ListTabs>
        <PanelToggle aria-label="侧栏">
          <svg width="12" height="12" viewBox="0 0 12 12" fill="none" stroke="#89878b">
            <rect x=".5" y=".5" width="11" height="11" rx="1" /><rect x="2" y="3" width="3" height="6" fill="#89878b" stroke="none" />
          </svg>
        </PanelToggle>
        <Periods>
          {periods.map((p) => (
            <Period key={p} $on={p === '日线'} $wide={p === '5秒' || p === '15秒'}>{p}</Period>
          ))}
        </Periods>
        <Actions>
          {['复权', '叠加', '多股', '统计', '画线', 'F10', '标记', '+自选', '返回'].map((a) => <Action key={a}>{a}</Action>)}
        </Actions>
      </ToolBar>
      <Main>
        <Side>
          <Stocks>
            <colgroup><col width="70" /><col width="57" /><col width="59" /></colgroup>
            <tbody>
              {stocks.map(([name, code, price, change, percent, marked], i) => (
                <StockRow key={code} $on={i === 1}>
                  <Cell><Name $marked={marked}>{name}</Name><Code>{code}</Code></Cell>
                  <PriceCell $right $tone={tone(change)}>{price}</PriceCell>
                  <Cell $right $tone={tone(change)}><Change>{change}</Change>{percent}</Cell>
                </StockRow>
              ))}
            </tbody>
          </Stocks>
          <Scroll>
            <ScrollUp aria-label="向上">
              <svg width="7" height="4" viewBox="0 0 7 4" aria-hidden="true"><path d="M0 4l3.500-4L7 4z" fill="#4e4e52" /></svg>
            </ScrollUp>
          </Scroll>
        </Side>
        <Charts>
          <PricePanel>
            <Head $tall>
              <HeadBody $low>
                <HeadLine $gap={4}><Title>博威合金 (日线.前复权)</Title><RoundToggle /></HeadLine>
                <HeadLine $gap={4}>{quote.map(([t, k]) => <Value key={t} $tone={k}>{t}</Value>)}</HeadLine>
              </HeadBody>
              <HeadIcons>
                <svg width="12" height="12" viewBox="0 0 12 12" aria-hidden="true"><path d="M6 1l5 5-5 5-5-5z" fill="none" stroke="#6c6a6d" /></svg>
                <svg width="12" height="12" viewBox="0 0 12 12" fill="none" stroke="#89878b" aria-hidden="true">
                  <rect x=".5" y=".5" width="11" height="11" rx="1" /><rect x="7" y="2" width="3" height="8" fill="#89878b" stroke="none" />
                </svg>
              </HeadIcons>
              <AxisGap />
            </Head>
            <PricePlot />
          </PricePanel>
          <IndicatorPanel>
            <Head>
              <HeadBody>
                <HeadLine $gap={7}>
                  <HeadLine $gap={4}><RoundToggle /><Value>主力</Value></HeadLine>
                  {readings.map(([t, k]) => <Value key={t} $tone={k}>{t}</Value>)}
                </HeadLine>
              </HeadBody>
              <AxisGap $thick />
            </Head>
            <IndicatorPlot />
          </IndicatorPanel>
        </Charts>
      </Main>
    </Page>
  );
}
